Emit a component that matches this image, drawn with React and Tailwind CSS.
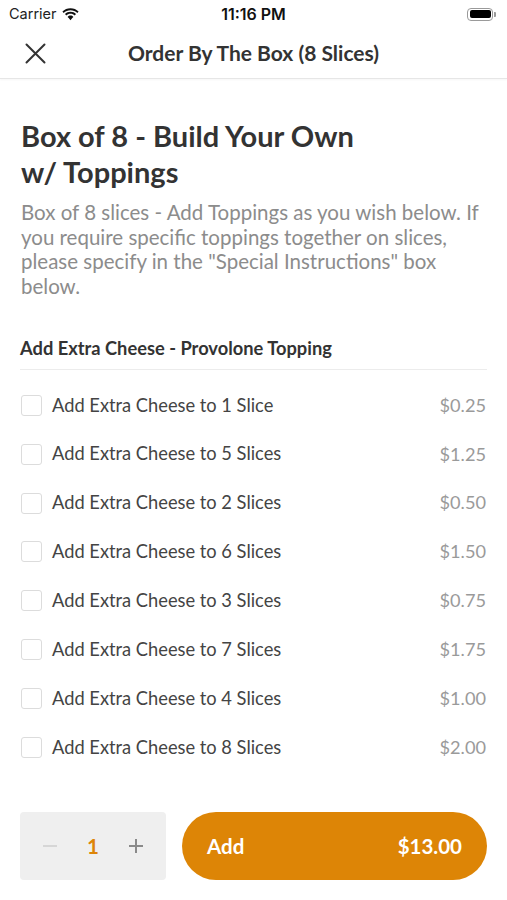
import React from "react";

const rows = [
  ["Add Extra Cheese to 1 Slice", "$0.25"],
  ["Add Extra Cheese to 5 Slices", "$1.25"],
  ["Add Extra Cheese to 2 Slices", "$0.50"],
  ["Add Extra Cheese to 6 Slices", "$1.50"],
  ["Add Extra Cheese to 3 Slices", "$0.75"],
  ["Add Extra Cheese to 7 Slices", "$1.75"],
  ["Add Extra Cheese to 4 Slices", "$1.00"],
  ["Add Extra Cheese to 8 Slices", "$2.00"],
];

function Wifi() {
  return (
    <svg width="17" height="13" viewBox="0 0 17 13">
      <path d="M8.5 2.2c2.6 0 5 1 6.8 2.7l1.3-1.4C14.5 1.4 11.6.2 8.5.2S2.5 1.4.4 3.5l1.3 1.4C3.5 3.2 5.9 2.2 8.5 2.2z" fill="#111" />
      <path d="M8.5 5.8c1.6 0 3.1.6 4.2 1.6l1.3-1.4C12.6 4.6 10.6 3.8 8.5 3.8S4.4 4.6 3 6l1.3 1.4c1.1-1 2.6-1.6 4.2-1.6z" fill="#111" />
      <path d="M8.5 9.3c.7 0 1.3.3 1.8.7l-1.8 2.2-1.8-2.2c.5-.4 1.1-.7 1.8-.7z M5.6 8.9l1.1 1.2C7.2 9.6 7.8 9.3 8.5 9.3s1.3.3 1.8.8l1.1-1.2C10.6 8.1 9.6 7.6 8.5 7.6S6.4 8.1 5.6 8.9z" fill="#111" />
    </svg>
  );
}

export default function App() {
  return (
    <div className="w-[507px] h-[900px] bg-white flex flex-col" style={{ fontFamily: "Lato, 'Open Sans', sans-serif" }}>
      <div className="h-[28px] flex items-center justify-between px-[9px] relative" style={{ fontFamily: "Inter, 'Liberation Sans', sans-serif" }}>
        <div className="flex items-center gap-[5px] text-[14.5px] text-[#222]">
          <span>Carrier</span>
          <Wifi />
        </div>
        <div className="absolute left-0 right-0 text-center text-[16px] font-semibold text-[#111]">11:16 PM</div>
        <div className="flex items-center pr-[2px]">
          <div className="w-[26px] h-[13px] rounded-[4px] border-[1.5px] border-[#9a9a9a] p-[1.5px]">
            <div className="w-full h-full bg-black rounded-[2px]" />
          </div>
          <div className="w-[2px] h-[5px] bg-[#9a9a9a] rounded-r-[1px] ml-[1px]" />
        </div>
      </div>
      <div className="h-[51px] flex items-center relative border-b border-[#e6e6e6] shadow-[0_1px_2px_rgba(0,0,0,0.04)]">
        <svg className="absolute left-[25px]" width="21" height="21" viewBox="0 0 21 21">
          <path d="M1.5 1.5 L19.5 19.5 M19.5 1.5 L1.5 19.5" stroke="#333" strokeWidth="2" strokeLinecap="round" />
        </svg>
        <div className="w-full text-center text-[21px] font-bold text-[#333]">Order By The Box (8 Slices)</div>
      </div>

      <div className="flex-1 px-[21px] pt-[39px]">
        <h1 className="text-[29px] leading-[36px] font-bold text-[#333] pr-[120px]">Box of 8 - Build Your Own w/ Toppings</h1>
        <p className="mt-[10px] text-[20.5px] leading-[24.6px] text-[#8c8c8c]">
          Box of 8 slices - Add Toppings as you wish below. If you require specific toppings together on slices, please specify in the "Special Instructions" box below.
        </p>
        <div className="mt-[37px] text-[18.3px] font-bold text-[#333] pb-[6px] border-b border-[#ececec] -mx-px">Add Extra Cheese - Provolone Topping</div>
        <div className="flex flex-col pt-[11px]">
          {rows.map(([label, price]) => (
            <div key={label} className="h-[48.9px] flex items-center">
              <div className="w-[21px] h-[21px] rounded-[3px] border border-[#dcdcdc] mr-[10px]" />
              <div className="flex-1 text-[18.3px] text-[#444]">{label}</div>
              <div className="text-[18.2px] text-[#9a9a9a]">{price}</div>
            </div>
          ))}
        </div>
      </div>

      <div className="px-[20px] pb-[20px] flex gap-[16px]">
        <div className="w-[146px] h-[68px] bg-[#efefef] rounded-[4px] flex items-center justify-between pl-[22px] pr-[22px]">
          <svg width="16" height="16" viewBox="0 0 16 16">
            <path d="M1 8 H15" stroke="#d6d6d6" strokeWidth="2" />
          </svg>
          <span className="text-[20.5px] font-bold text-[#dd8507]">1</span>
          <svg width="16" height="16" viewBox="0 0 16 16">
            <path d="M1 8 H15 M8 1 V15" stroke="#8a8a8a" strokeWidth="2" />
          </svg>
        </div>
        <div className="flex-1 h-[68px] rounded-full bg-[#dd8506] flex items-center justify-between px-[25px] text-white text-[20.5px] font-bold">
          <span>Add</span>
          <span>$13.00</span>
        </div>
      </div>
    </div>
  );
}
